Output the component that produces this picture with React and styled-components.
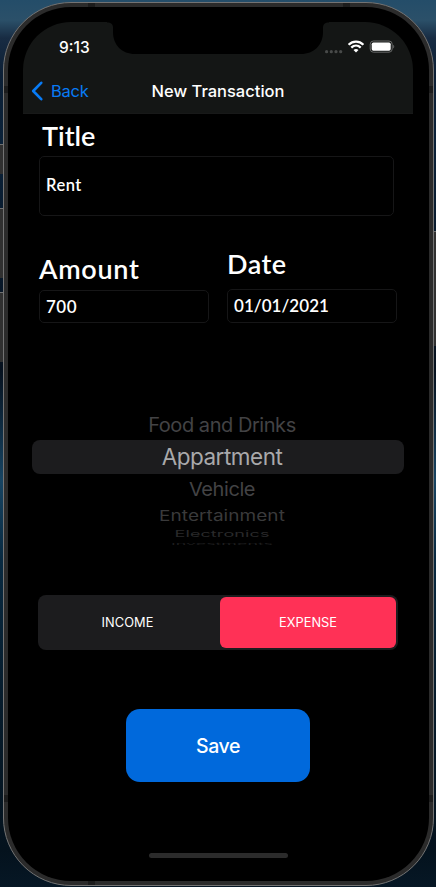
import styled, { createGlobalStyle } from "styled-components";

const categories = [
  { name: "Food and Drinks", height: 31, size: 20, color: "#434345", spacing: -0.45, scale: 0.97 },
  { name: "Appartment", height: 34, size: 22.5, color: "#a9a9ab", spacing: -0.5, scale: 1 },
  { name: "Vehicle", height: 30, size: 20, color: "#434345", spacing: -0.4, scale: 0.95 },
  { name: "Entertainment", height: 23, size: 19, color: "#3a3a3b", spacing: 0.05, scale: 0.78 },
  { name: "Electronics", height: 14, size: 18, color: "#29292a", spacing: 0.1, scale: 0.5 },
  { name: "Investments", height: 6, size: 18, color: "#1e1e1f", spacing: -0.1, scale: 0.14 },
];

function App() {
  return (
    <>
      <GlobalStyle />
      <Desktop>
        <SideButton $left="0" $top="144px" $height="30px" />
        <SideButton $left="0" $top="208px" $height="70px" />
        <SideButton $left="0" $top="292px" $height="70px" />
        <SideButton $left="434px" $top="231px" $height="115px" />
        <Phone>
          <Antenna $left="84px" $top="0" $width="7px" $height="4px" />
          <Antenna $left="339px" $top="0" $width="7px" $height="4px" />
          <Antenna $left="84px" $top="878px" $width="7px" $height="4px" />
          <Antenna $left="0" $top="83px" $width="4px" $height="7px" />
          <Antenna $left="425px" $top="83px" $width="4px" $height="7px" />
          <Antenna $left="0" $top="792px" $width="4px" $height="7px" />
          <Antenna $left="425px" $top="792px" $width="4px" $height="7px" />
          <Bezel>
            <Screen>
              <Notch viewBox="0 0 222 33">
                <path d="M0 0H222V0.5C218 0.5 216 2 216 6V10C216 23 207 32 194 32H28C15 32 6 23 6 10V6C6 2 4 0.5 0 0.5Z" fill="#000" />
              </Notch>
              <TopBar>
                <StatusBar>
                  <Time>9:13</Time>
                  <StatusIcons />
                </StatusBar>
                <NavBar>
                  <BackBtn>
                    <svg width="12" height="20" viewBox="0 0 12 20">
                      <path d="M10.2 1.8L2.2 10L10.2 18.2" fill="none" stroke="#087bf5" strokeWidth="2.6" strokeLinecap="round" strokeLinejoin="round" />
                    </svg>
                    <span>Back</span>
                  </BackBtn>
                  <NavTitle>New Transaction</NavTitle>
                </NavBar>
              </TopBar>

              <TitleField>
                <Label $spacing="0px">Title</Label>
                <Input $height="60px" $size="16.5px" $spacing="0.5px">Rent</Input>
              </TitleField>

              <Columns>
                <AmountField>
                  <Label $spacing="0.7px">Amount</Label>
                  <Input $height="33px" $size="17px" $spacing="0.5px">700</Input>
                </AmountField>
                <DateField>
                  <Label $spacing="0.5px">Date</Label>
                  <Input $height="34px" $size="17px" $spacing="0.05px">01/01/2021</Input>
                </DateField>
              </Columns>

              <Picker>
                {categories.map((item) => (
                  <PickerRow key={item.name} $height={item.height} $selected={item.name === "Appartment"}>
                    <PickerText $item={item}>{item.name}</PickerText>
                  </PickerRow>
                ))}
              </Picker>

              <Segments>
                <Segment>INCOME</Segment>
                <Segment $active>EXPENSE</Segment>
              </Segments>

              <SaveBtn>Save</SaveBtn>
              <HomeBar />
            </Screen>
          </Bezel>
        </Phone>
      </Desktop>
    </>
  );
}

function StatusIcons() {
  return (
    <svg width="71" height="16" viewBox="0 0 71 16">
      <g fill="#484a49">
        <circle cx="2.6" cy="12.7" r="1.6" />
        <circle cx="7.3" cy="12.7" r="1.6" />
        <circle cx="12" cy="12.7" r="1.6" />
        <circle cx="16.7" cy="12.7" r="1.6" />
      </g>
      <g fill="none" stroke="#fff" strokeWidth="2.3">
        <path d="M24.6 5.7C28.9 1.5 35.1 1.5 39.4 5.7" />
        <path d="M27.3 8.6C30.1 6 33.9 6 36.7 8.6" />
      </g>
      <path d="M32 13.4L29.5 10.9C30.9 9.6 33.1 9.6 34.5 10.9Z" fill="#fff" />
      <rect x="46.2" y="2" width="22" height="11.2" rx="3.2" fill="none" stroke="#666867" />
      <rect x="47.7" y="3.5" width="19" height="8.2" rx="1.7" fill="#fff" />
      <path d="M69.2 5.8C70.6 6.4 70.6 8.9 69.2 9.5Z" fill="#666867" />
    </svg>
  );
}

const GlobalStyle = createGlobalStyle`
  * {
    box-sizing: border-box;
  }
  body {
    margin: 0;
    font-family: Inter, sans-serif;
    color: #fff;
  }
`;

const Desktop = styled.div`
  position: relative;
  width: 436px;
  height: 887px;
  padding: 2px 2px 0 3px;
  overflow: hidden;
  background: linear-gradient(
    #244d69 0,
    #2b5069 20px,
    #182c43 38px,
    #0c1f35 75px,
    #0a2138 140px,
    #06111e 370px,
    #174462 480px,
    #082940 560px,
    #061b2b 700px,
    #04121d 850px,
    #061725 887px
  );
`;

const SideButton = styled.div`
  position: absolute;
  left: ${(props) => props.$left};
  top: ${(props) => props.$top};
  width: 3px;
  height: ${(props) => props.$height};
  background-color: #303030;
  border-top: 1px solid #707070;
`;

const Phone = styled.div`
  position: relative;
  width: 431px;
  height: 884px;
  padding: 4px;
  border: 1px solid #737373;
  border-radius: 68px;
  background-color: #2b2b2b;
`;

const Antenna = styled.div`
  position: absolute;
  left: ${(props) => props.$left};
  top: ${(props) => props.$top};
  width: ${(props) => props.$width};
  height: ${(props) => props.$height};
  background-color: #1c1c1c;
`;

const Bezel = styled.div`
  height: 874px;
  padding: 15px 16px 15px 15px;
  border-radius: 63px;
  background-color: #000;
`;

const Screen = styled.div`
  position: relative;
  display: flex;
  flex-direction: column;
  width: 390px;
  height: 844px;
  overflow: hidden;
  border-radius: 48px;
  background-color: #000;
`;

const Notch = styled.svg`
  position: absolute;
  left: 84px;
  top: 0;
  width: 222px;
  height: 33px;
`;

const TopBar = styled.div`
  height: 92px;
  background-color: #141615;
  border-bottom: 1px solid #181919;
`;

const StatusBar = styled.div`
  display: flex;
  justify-content: space-between;
  align-items: center;
  height: 47px;
  padding: 3px 18px 0 36px;
`;

const Time = styled.span`
  font-size: 15.5px;
  font-weight: 500;
  letter-spacing: 0;
`;

const NavBar = styled.div`
  display: grid;
  grid-template-columns: 1fr auto 1fr;
  align-items: center;
  height: 44px;
`;

const BackBtn = styled.div`
  display: flex;
  align-items: center;
  gap: 8px;
  padding-left: 8px;
  color: #087bf5;
  font-size: 16.5px;
  letter-spacing: -0.25px;
`;

const NavTitle = styled.h1`
  margin: 0;
  font-size: 16.5px;
  font-weight: 500;
  letter-spacing: 0;
`;

const TitleField = styled.div`
  width: 355px;
  margin: 4px 0 0 16px;
  > p {
    margin: 0 0 2px 3px;
  }
  > div {
    padding-bottom: 2px;
  }
`;

const Label = styled.p`
  margin: 0;
  font-family: Lato, sans-serif;
  font-size: 27px;
  font-weight: 600;
  line-height: 36px;
  letter-spacing: ${(props) => props.$spacing};
`;

const Input = styled.div`
  display: flex;
  align-items: center;
  height: ${(props) => props.$height};
  padding-left: 6px;
  padding-bottom: 1px;
  border: 1px solid #161617;
  border-radius: 5px;
  font-family: Lato, sans-serif;
  font-size: ${(props) => props.$size};
  font-weight: 600;
  letter-spacing: ${(props) => props.$spacing};
`;

const Columns = styled.div`
  display: grid;
  grid-template-columns: 170px 170px;
  gap: 18px;
  height: 107px;
  margin-left: 16px;
  align-items: end;
`;

const AmountField = styled.div`
  > p {
    margin-bottom: 3px;
  }
`;

const DateField = styled.div`
  > p {
    margin-bottom: 7px;
  }
`;

const Picker = styled.div`
  margin: 86px 9px 0;
`;

const PickerRow = styled.div`
  display: flex;
  align-items: center;
  justify-content: center;
  height: ${(props) => props.$height}px;
  padding-left: 8px;
  border-radius: 8px;
  background-color: ${(props) => (props.$selected ? "#1c1c1e" : "transparent")};
`;

const PickerText = styled.span`
  font-size: ${(props) => props.$item.size}px;
  line-height: 1;
  letter-spacing: ${(props) => props.$item.spacing}px;
  color: ${(props) => props.$item.color};
  transform: scaleY(${(props) => props.$item.scale});
`;

const Segments = styled.div`
  display: grid;
  grid-template-columns: 1fr 176px;
  width: 360px;
  height: 55px;
  margin: 48px 0 0 15px;
  padding: 2px;
  border-radius: 8px;
  background-color: #1c1c1e;
`;

const Segment = styled.div`
  display: flex;
  align-items: center;
  justify-content: center;
  padding-right: ${(props) => (props.$active ? "0" : "5px")};
  border-radius: 6px;
  background-color: ${(props) => (props.$active ? "#ff3156" : "transparent")};
  font-size: 12.8px;
  letter-spacing: 0.05px;
`;

const SaveBtn = styled.button`
  width: 184px;
  height: 73px;
  margin: 59px 0 0 103px;
  border: 0;
  border-radius: 14px;
  background-color: #0069dc;
  color: #fff;
  font-family: Inter, sans-serif;
  font-size: 19.5px;
  font-weight: 500;
  letter-spacing: -0.4px;
`;

const HomeBar = styled.div`
  width: 139px;
  height: 5px;
  margin: auto 0 8px 126px;
  border-radius: 3px;
  background-color: #2b2b2b;
`;

export default App;
